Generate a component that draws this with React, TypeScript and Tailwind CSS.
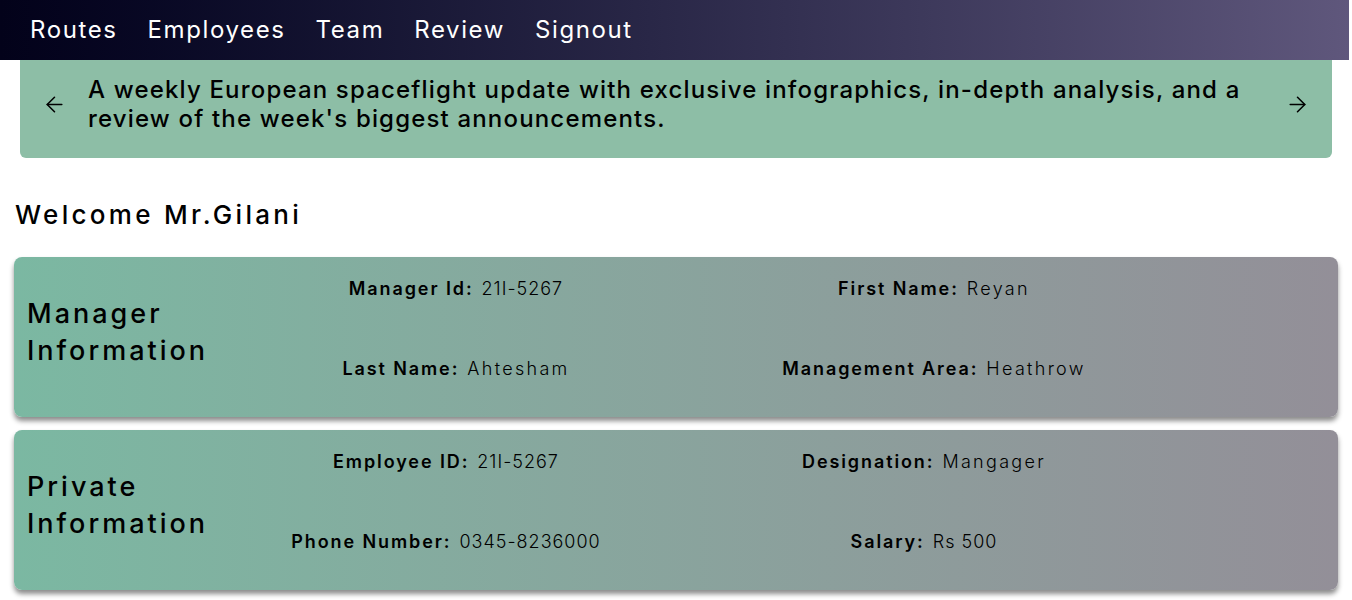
import { ArrowLeft, ArrowRight } from "lucide-react";

const font = { fontFamily: "Inter, 'Noto Sans', sans-serif" };

type Field = { label: string; value: string; numeric?: boolean };

function InfoCard({ title, fields, gridClass }: { title: string[]; fields: Field[]; gridClass: string }) {
  return (
    <div className="flex items-center h-[160px] rounded-lg bg-linear-to-r from-[#7bb8a2] to-[#938f98] shadow-[0_4px_5px_rgba(0,0,0,0.45)] pl-[13px] pb-[10px]">
      <h2 className="w-[190px] shrink-0 text-[27px] leading-[37px] tracking-[3px] font-medium text-black whitespace-nowrap">
        {title[0]}
        <br />
        {title[1]}
      </h2>
      <div className={`grid grid-cols-2 w-[956px] gap-y-[58px] mb-[6px] ${gridClass}`}>
        {fields.map((f) => (
          <div key={f.label} className="flex justify-center items-baseline text-[18px] leading-[22px] text-black whitespace-nowrap">
            <span className="font-semibold tracking-[1.9px]">{f.label}</span>
            <span className={f.numeric ? "font-light tracking-[1px] ml-[8px]" : "font-light tracking-[2.3px] ml-[8px]"}>
              {f.value}
            </span>
          </div>
        ))}
      </div>
    </div>
  );
}

export default function App() {
  return (
    <div className="min-h-[600px] bg-white" style={font}>
      <nav className="h-[60px] flex items-center gap-[30px] pl-[30px] bg-linear-to-r from-[#03021a] to-[#5f577c] text-white text-[24px] tracking-[1.6px] mr-[3px]">
        <a>Routes</a>
        <a>Employees</a>
        <a>Team</a>
        <a>Review</a>
        <a>Signout</a>
      </nav>

      <div className="mx-[20px] h-[98px] rounded-b-md bg-[#8dbea6] flex items-center pl-[22px] pr-[22px] pb-[10px]">
        <ArrowLeft className="w-[25px] h-[25px] shrink-0 text-black" strokeWidth={1.5} />
        <p className="ml-[21px] flex-1 text-[24px] leading-[29px] tracking-[1.17px] font-medium text-black whitespace-nowrap">
          A weekly European spaceflight update with exclusive infographics, in-depth analysis, and a
          <br />
          review of the week's biggest announcements.
        </p>
        <ArrowRight className="w-[25px] h-[25px] shrink-0 text-black" strokeWidth={1.5} />
      </div>

      <h1 className="mt-[39px] ml-[15px] text-[26px] leading-[36px] tracking-[3.3px] font-medium text-black">Welcome Mr.Gilani</h1>

      <div className="mt-[24px] mx-[14px] flex flex-col gap-[13px]">
        <InfoCard
          title={["Manager", "Information"]}
          gridClass="ml-0"
          fields={[
            { label: "Manager Id:", value: "21I-5267", numeric: true },
            { label: "First Name:", value: "Reyan" },
            { label: "Last Name:", value: "Ahtesham" },
            { label: "Management Area:", value: "Heathrow" },
          ]}
        />
        <InfoCard
          title={["Private", "Information"]}
          gridClass="-ml-[10px]"
          fields={[
            { label: "Employee ID:", value: "21I-5267", numeric: true },
            { label: "Designation:", value: "Mangager" },
            { label: "Phone Number:", value: "0345-8236000", numeric: true },
            { label: "Salary:", value: "Rs 500", numeric: true },
          ]}
        />
      </div>
    </div>
  );
}
